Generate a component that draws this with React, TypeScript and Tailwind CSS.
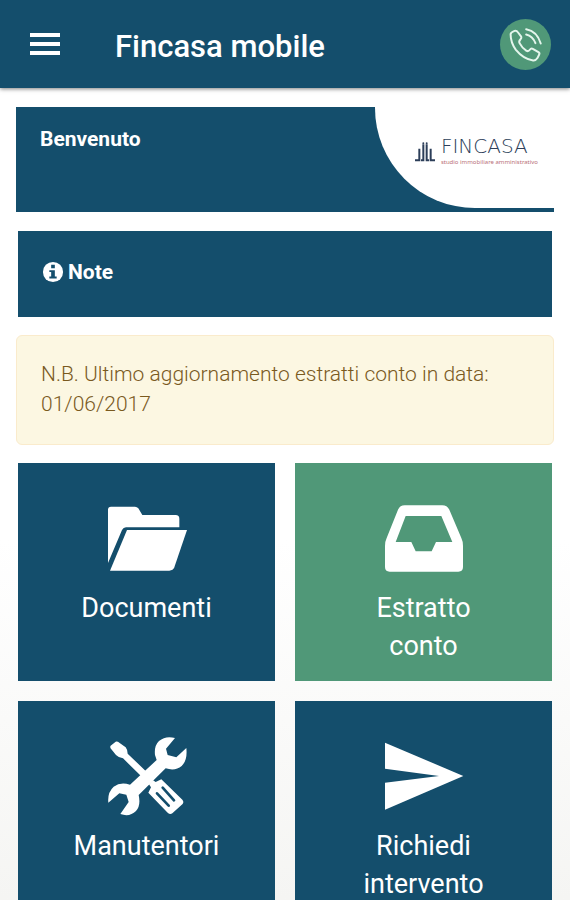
import type { ReactNode } from 'react';
import clsx from 'clsx';

function PhoneIcon() {
  return (
    <svg
      viewBox="90 57 154 154"
      className="h-full w-full"
      fill="none"
      stroke="currentColor"
      strokeWidth={6}
      strokeLinecap="round"
      strokeLinejoin="round"
      aria-hidden="true"
    >
      <path d="M122 103Q122 98 134 93Q140 91 144 97L154 110Q156 114 152 118Q146 124 149 130Q156 144 170 153Q176 156 180 150Q184 144 189 147L206 157Q211 160 208 165L203 175Q198 183 190 182Q161 178 138 150Q122 128 122 103Z" />
      <path d="M169 104Q189 109 197 130" />
      <path d="M169 88Q202 94 213 131" />
    </svg>
  );
}

function FolderIcon() {
  return (
    <svg viewBox="0 0 240 240" className="size-20" fill="currentColor" aria-hidden="true">
      <path d="M3 35Q3 26 12 26H84Q90 26 94 31L106 51H206Q217 51 217 62V88H57Q49 88 45 96L3 195Z" />
      <path d="M60 96H240L202 208Q198 218 187 218H9Z" />
    </svg>
  );
}

function InboxIcon() {
  return (
    <svg viewBox="0 0 240 240" className="size-20" fill="currentColor" aria-hidden="true">
      <path
        fillRule="evenodd"
        d="M62 22H175Q189 22 196 35L232 120Q237 130 237 144V207Q237 221 223 221H17Q3 221 3 207V144Q3 130 8 120L42 35Q48 22 62 22ZM65 54L35 132H82L95 160H143L156 132H205L172 54Z"
      />
    </svg>
  );
}

function ToolsIcon() {
  return (
    <svg viewBox="50 48 240 240" className="size-20" aria-hidden="true">
      <g fill="currentColor">
        <path d="M60 78L76 65Q82 64 88 69L106 82Q112 90 112 101L166 153L152 168L98 115Q86 114 77 105L60 84Z" />
        <path d="M254 54Q226 46 206 63Q191 77 194 105L199 120L119 194Q91 184 70 200Q51 217 54 248L87 220L108 224L115 246L90 282Q118 292 137 273Q152 257 145 225L226 145Q255 154 274 138Q292 120 288 84L258 112L232 105L227 86Z" />
        <path d="M188 181L196 186L213 178L276 239Q282 246 276 253L246 280Q239 285 232 278L174 218L182 202L176 193Z" />
      </g>
      <path
        d="M200 220L235 257M217 203L251 241"
        fill="none"
        stroke="#144e6c"
        strokeWidth={8}
        strokeLinecap="round"
      />
    </svg>
  );
}

function SendIcon() {
  return (
    <svg viewBox="0 0 240 240" className="size-20" fill="currentColor" aria-hidden="true">
      <path d="M3 20L238 120L3 221V140L165 120L3 98Z" />
    </svg>
  );
}

function Logo() {
  return (
    <div className="flex items-center gap-1.5">
      <svg viewBox="0 0 60 60" className="size-5 shrink-0" fill="#2c3e59" aria-hidden="true">
        <path d="M0 52H10V20H16V58H0ZM22 7H28V58H18V52H22ZM32 7H38V52H42V58H32ZM44 20H50V52H60V58H44Z" />
        <circle cx="25" cy="4" r="3" />
        <circle cx="35" cy="4" r="3" />
      </svg>
      <div className="flex flex-col pb-1">
        <span className="font-['DejaVu_Sans',sans-serif] text-[20px] leading-6 font-extralight text-[#2c3e59]">
          FINCASA
        </span>
        <span className="font-['Noto_Sans',sans-serif] text-[6px] leading-[8px] whitespace-nowrap text-[#b96f78]">
          studio immobiliare amministrativo
        </span>
      </div>
    </div>
  );
}

interface TileProps {
  label: string;
  icon: ReactNode;
  highlighted?: boolean;
}

function Tile({ label, icon, highlighted }: TileProps) {
  return (
    <button
      type="button"
      className={clsx(
        'flex flex-col items-center justify-start gap-[11px] px-12 pt-[35px] pb-4 text-white',
        highlighted ? 'bg-[#509878]' : 'bg-[#144e6c]'
      )}
    >
      {icon}
      <span className="text-[27px] leading-[38px]">{label}</span>
    </button>
  );
}

const tiles: TileProps[] = [
  { label: 'Documenti', icon: <FolderIcon /> },
  { label: 'Estratto conto', icon: <InboxIcon />, highlighted: true },
  { label: 'Manutentori', icon: <ToolsIcon /> },
  { label: 'Richiedi intervento', icon: <SendIcon /> },
];

export default function App() {
  return (
    <div className="flex h-screen flex-col overflow-hidden bg-linear-to-b from-white from-60% to-[#f5f5f3] font-[Roboto,sans-serif]">
      <header className="z-10 flex h-[88px] shrink-0 items-center bg-[#144e6c] px-[19px] text-white shadow-[0_1px_4px_rgba(0,0,0,0.5)]">
        <button type="button" aria-label="Menu" className="p-[11px]">
          <svg viewBox="0 0 30 22" className="h-[22px] w-[30px]" fill="currentColor" aria-hidden="true">
            <path d="M0 0H30V4H0ZM0 9H30V13H0ZM0 18H30V22H0Z" />
          </svg>
        </button>
        <h1 className="ml-11 flex-1 pt-1.5 text-[31px] leading-10 font-medium">Fincasa mobile</h1>
        <button type="button" aria-label="Chiama" className="size-[51px] rounded-full bg-[#509878] text-[#e4f5ec]">
          <PhoneIcon />
        </button>
      </header>

      <main className="flex-1 overflow-y-auto px-4 pt-[19px] [scrollbar-width:none]">
        <section className="flex justify-between bg-[#144e6c] pb-1">
          <h2 className="px-6 py-4 text-[21px] leading-8 font-bold text-white">Benvenuto</h2>
          <div className="flex h-[101px] w-1/3 items-center justify-end rounded-bl-[100px] bg-white pr-4 pb-3">
            <Logo />
          </div>
        </section>

        <section className="mx-[2px] mt-[19px] bg-[#144e6c] px-6 pt-[25px] pb-[29px] text-white">
          <h2 className="flex items-center gap-1 text-[21px] leading-8 font-bold">
            <svg viewBox="0 0 24 24" className="size-[22px]" aria-hidden="true">
              <circle cx="12" cy="12" r="11" fill="currentColor" />
              <path d="M10 4H14V8H10ZM8 10H14V17H16V19H8V17H10V12H8Z" fill="#144e6c" />
            </svg>
            Note
          </h2>
        </section>

        <p className="mt-[18px] rounded-md border border-[#faebcc] bg-[#fcf7e2] px-6 pt-[23px] pb-[25px] text-[21px] leading-[30px] font-light text-[#7a5a1e]">
          N.B. Ultimo aggiornamento estratti conto in data: 01/06/2017
        </p>

        <div className="mx-[2px] my-[18px] grid auto-rows-fr grid-cols-2 gap-5">
          {tiles.map((tile) => (
            <Tile key={tile.label} {...tile} />
          ))}
        </div>
      </main>
    </div>
  );
}
